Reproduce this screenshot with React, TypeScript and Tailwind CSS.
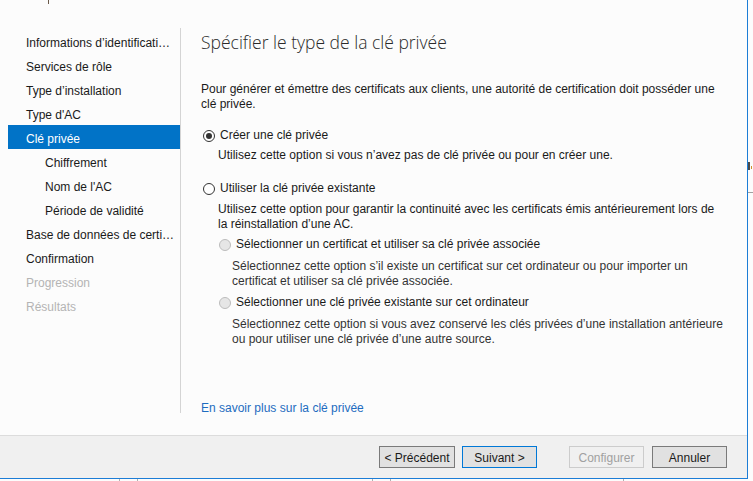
import React from "react";

const navItems: { t: string; sub?: boolean; active?: boolean; disabled?: boolean }[] = [
  { t: "Informations d’identificati…" },
  { t: "Services de rôle" },
  { t: "Type d’installation" },
  { t: "Type d'AC" },
  { t: "Clé privée", active: true },
  { t: "Chiffrement", sub: true },
  { t: "Nom de l'AC", sub: true },
  { t: "Période de validité", sub: true },
  { t: "Base de données de certi…" },
  { t: "Confirmation" },
  { t: "Progression", disabled: true },
  { t: "Résultats", disabled: true },
];

function Radio({ checked, disabled }: { checked?: boolean; disabled?: boolean }) {
  return (
    <span
      className={
        "flex h-[12px] w-[12px] shrink-0 items-center justify-center rounded-full border " +
        (disabled ? "border-[#bcbcbc] bg-[#e6e6e6]" : "border-[#333333] bg-white")
      }
    >
      {checked && <span className="h-[6px] w-[6px] rounded-full bg-[#333333]" />}
    </span>
  );
}

function Btn({
  children,
  variant,
  w,
}: {
  children: React.ReactNode;
  variant?: "default" | "primary" | "disabled";
  w: string;
}) {
  const cls =
    variant === "primary"
      ? "border-[#0078d7] bg-[#e1e1e1] text-[#1a1a1a]"
      : variant === "disabled"
      ? "border-[#cccccc] bg-[#f0f0f0] text-[#a0a0a0]"
      : "border-[#7a7a7a] bg-[#e1e1e1] text-[#1a1a1a]";
  return (
    <div
      className={
        "flex h-[22px] items-center justify-center border pt-[1px] text-[12px] leading-none " + cls + " " + w
      }
    >
      {children}
    </div>
  );
}

export default function App() {
  return (
    <div
      className="relative h-[481px] w-[753px] overflow-hidden bg-[#fcfcfc] text-[#1a1a1a]"
      style={{ fontFamily: '"Liberation Sans", Arial, sans-serif' }}
    >
      {/* top fragment */}
      <div className="absolute left-[48px] top-0 h-[4px] w-[1px] bg-[#6a5a4a]" />

      <div className="flex h-[479px] w-[748px] flex-col border-b border-r border-[#1c7dd6]">
        {/* main */}
        <div className="flex min-h-0 flex-1">
          {/* sidebar */}
          <div className="w-[180px] shrink-0 pl-[8px] pt-[29px]">
            {navItems.map((it) => (
              <div
                key={it.t}
                className={
                  "flex h-[24px] items-center whitespace-nowrap pt-[3px] text-[12px] " +
                  (it.sub ? "pl-[37px] " : "pl-[18px] ") +
                  (it.active
                    ? "bg-[#0173c7] text-white"
                    : it.disabled
                    ? "text-[#b4b4b4]"
                    : "text-[#1a1a1a]")
                }
              >
                {it.t}
              </div>
            ))}
          </div>
          {/* divider */}
          <div className="mb-[22px] mt-[28px] w-px shrink-0 bg-[#d4d4d4]" />
          {/* content */}
          <div className="flex flex-1 flex-col pl-[20px] pt-[30px] text-[12px] leading-[15px]">
            <div
              className="h-[24px] whitespace-nowrap text-[17.5px] leading-[24px] text-[#2a2a2a]"
              style={{ fontFamily: '"Open Sans", "Noto Sans", sans-serif', fontWeight: 300 }}
            >
              Spécifier le type de la clé privée
            </div>
            <p className="mt-[28px] whitespace-nowrap">
              Pour générer et émettre des certificats aux clients, une autorité de certification doit posséder une
              <br />
              clé privée.
            </p>

            <div className="ml-[2px] mt-[16px] flex items-center gap-[5px] whitespace-nowrap">
              <Radio checked />
              <span>Créer une clé privée</span>
            </div>
            <p className="ml-[17px] mt-[5px] whitespace-nowrap">
              Utilisez cette option si vous n’avez pas de clé privée ou pour en créer une.
            </p>

            <div className="ml-[2px] mt-[18px] flex items-center gap-[5px] whitespace-nowrap">
              <Radio />
              <span>Utiliser la clé privée existante</span>
            </div>
            <p className="ml-[17px] mt-[6px] whitespace-nowrap">
              Utilisez cette option pour garantir la continuité avec les certificats émis antérieurement lors de
              <br />
              la réinstallation d’une AC.
            </p>

            <div className="ml-[18px] mt-[5px] flex items-center gap-[5px] whitespace-nowrap">
              <Radio disabled />
              <span>Sélectionner un certificat et utiliser sa clé privée associée</span>
            </div>
            <p className="ml-[31px] mt-[7px] whitespace-nowrap text-[#333333]">
              Sélectionnez cette option s’il existe un certificat sur cet ordinateur ou pour importer un
              <br />
              certificat et utiliser sa clé privée associée.
            </p>

            <div className="ml-[18px] mt-[6px] flex items-center gap-[5px] whitespace-nowrap">
              <Radio disabled />
              <span>Sélectionner une clé privée existante sur cet ordinateur</span>
            </div>
            <p className="ml-[31px] mt-[7px] whitespace-nowrap text-[#333333]">
              Sélectionnez cette option si vous avez conservé les clés privées d’une installation antérieure
              <br />
              ou pour utiliser une clé privée d’une autre source.
            </p>

            <div className="mb-[19px] mt-auto whitespace-nowrap text-[#1e6cc0]">En savoir plus sur la clé privée</div>
          </div>
        </div>

        {/* bottom bar */}
        <div className="flex h-[43px] shrink-0 items-start border-t border-[#dcdcdc] bg-[#f0f0f0] pr-[20px] pt-[10px]">
          <div className="ml-auto flex">
            <Btn w="w-[76px]">&lt; Précédent</Btn>
            <div className="ml-[7px]">
              <Btn variant="primary" w="w-[75px]">
                Suivant &gt;
              </Btn>
            </div>
            <div className="ml-[32px]">
              <Btn variant="disabled" w="w-[75px]">
                Configurer
              </Btn>
            </div>
            <div className="ml-[8px]">
              <Btn w="w-[75px]">Annuler</Btn>
            </div>
          </div>
        </div>
      </div>

      {/* desktop fragments outside window */}
      <div className="absolute left-[748px] top-[192px] h-px w-[5px] bg-[#a0a0a0]" />
      <div className="absolute left-[748px] top-[162px] h-[8px] w-[2px] bg-[#4a4a4a]" />
      <div className="absolute left-[751px] top-[166px] h-[3px] w-[1px] bg-[#d0902a]" />
      <div className="absolute bottom-0 left-0 flex h-[2px] w-[748px]">
        <div className="ml-[119px] h-full w-px bg-[#b0b0b0]" />
        <div className="ml-[17px] h-full w-px bg-[#b0b0b0]" />
        <div className="ml-[234px] h-full w-px bg-[#b0b0b0]" />
        <div className="ml-[17px] h-full w-px bg-[#b0b0b0]" />
        <div className="ml-[232px] h-full w-px bg-[#b0b0b0]" />
      </div>
    </div>
  );
}
